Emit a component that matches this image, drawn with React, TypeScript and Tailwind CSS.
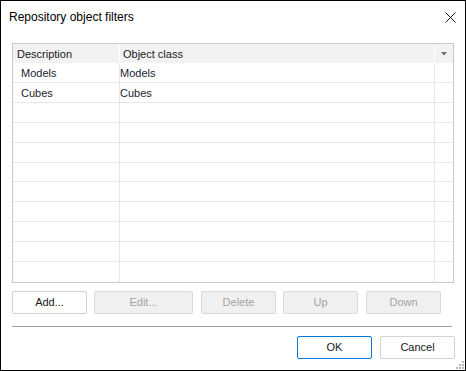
import type { ReactNode } from "react";

const rows = [
  { desc: "Models", cls: "Models" },
  { desc: "Cubes", cls: "Cubes" },
  ...Array.from({ length: 9 }, () => ({ desc: "", cls: "" })),
];

function Btn({
  children,
  width = "w-[75px]",
  disabled,
  primary,
  className = "",
}: {
  children: ReactNode;
  width?: string;
  disabled?: boolean;
  primary?: boolean;
  className?: string;
}) {
  const look = disabled
    ? "border-[#dadada] bg-[#f0f0f0] text-[#a3a3a3]"
    : primary
      ? "border-[#0078d7] bg-white text-[#1a1a1a]"
      : "border-[#d2d2d2] bg-white text-[#1a1a1a]";
  return (
    <button
      disabled={disabled}
      className={`${width} ${look} ${className} flex h-[23px] items-center justify-center rounded-[2px] border text-[11px] leading-none`}
    >
      {children}
    </button>
  );
}

export default function App() {
  return (
    <div
      className="flex h-[371px] w-[466px] flex-col border border-black bg-white text-[#1a1a1a]"
      style={{ fontFamily: '"Liberation Sans", Arial, sans-serif' }}
    >
      {/* title bar */}
      <div className="flex h-[31px] items-center justify-between pl-[8px] pr-[9px]">
        <span className="pt-[1px] text-[12px] text-black">Repository object filters</span>
        <svg width="11" height="11" viewBox="0 0 11 11" className="mt-[1px]">
          <path d="M0.5 0.5 L10.5 10.5 M10.5 0.5 L0.5 10.5" stroke="#111" strokeWidth="1" />
        </svg>
      </div>

      {/* grid */}
      <div className="ml-[11px] mt-[11px] flex h-[240px] w-[442px] flex-col border border-[#c9c9c9]">
        <div className="flex h-[19px] bg-[#f2f2f2] pt-[1px] text-[11px]">
          <div className="flex w-[107px] items-center border-r border-white pl-[4px]">Description</div>
          <div className="flex w-[315px] items-center border-r border-white pl-[3px]">Object class</div>
          <div className="flex w-[18px] items-center justify-center">
            <svg width="6" height="4" viewBox="0 0 6 4">
              <path d="M0 0 H6 L3 3.5 Z" fill="#707070" />
            </svg>
          </div>
        </div>
        {rows.map((r, i) => (
          <div
            key={i}
            className={`flex h-[20px] text-[11px] text-[#1c1c30] ${i < rows.length - 1 ? "border-b border-[#e8e8e8]" : ""}`}
          >
            <div className="flex w-[107px] items-center border-r border-[#e8e8e8] pl-[8px] pt-[2px]">{r.desc}</div>
            <div className="flex w-[315px] items-center border-r border-[#e8e8e8] pt-[2px]">{r.cls}</div>
            <div className="w-[18px]" />
          </div>
        ))}
      </div>

      {/* action buttons */}
      <div className="ml-[11px] mt-[8px] flex">
        <Btn>Add...</Btn>
        <Btn width="w-[99px]" disabled className="ml-[7px]">
          Edit...
        </Btn>
        <Btn disabled className="ml-[8px]">
          Delete
        </Btn>
        <Btn disabled className="ml-[7px]">
          Up
        </Btn>
        <Btn disabled className="ml-[8px]">
          Down
        </Btn>
      </div>

      <div className="ml-[11px] mt-[12px] h-px w-[440px] bg-[#a0a0a0]" />

      {/* dialog buttons */}
      <div className="mt-[9px] flex justify-end pr-[10px]">
        <Btn primary>OK</Btn>
        <Btn className="ml-[8px]">Cancel</Btn>
      </div>

      {/* resize grip */}
      <div className="mt-auto flex justify-end pb-[1px] pr-[1px]">
        <svg width="9" height="9" viewBox="0 0 9 9">
          {[
            [7, 1],
            [4, 4],
            [7, 4],
            [1, 7],
            [4, 7],
            [7, 7],
          ].map(([x, y], k) => (
            <rect key={k} x={x} y={y} width="2" height="2" fill="#b8b8b8" />
          ))}
        </svg>
      </div>
    </div>
  );
}
